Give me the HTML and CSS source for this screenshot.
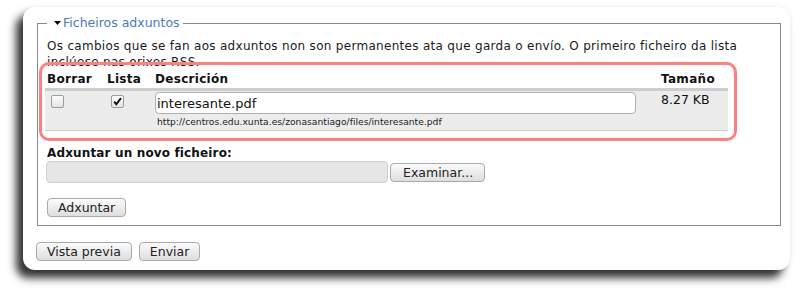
FILE: index.html
```html
<!DOCTYPE html>
<html lang="gl">
<head>
<meta charset="utf-8">
<title>Ficheiros adxuntos</title>
<link rel="stylesheet" href="styles.css">
</head>
<body>
<div class="card">
  <fieldset class="attachments">
    <legend class="legend"><svg class="arrow" width="7" height="4" viewBox="0 0 7 4"><polygon points="0,0 7,0 3.5,4" fill="#000"/></svg>Ficheiros adxuntos</legend>
    <p class="intro">Os cambios que se fan aos adxuntos non son permanentes ata que garda o envío. O primeiro ficheiro da lista inclúese nas orixes RSS.</p>
    <table class="files">
      <colgroup>
        <col class="c-del"><col class="c-list"><col class="c-desc"><col class="c-size">
      </colgroup>
      <thead>
        <tr><th>Borrar</th><th>Lista</th><th>Descrición</th><th>Tamaño</th></tr>
      </thead>
      <tbody>
        <tr>
          <td><span class="check" role="checkbox" aria-checked="false"></span></td>
          <td><span class="check" role="checkbox" aria-checked="true"><svg width="11" height="11" viewBox="0 0 11 11"><path d="M2.2 5.6 L4.3 8.2 L9 2.2" fill="none" stroke="#111" stroke-width="1.9"/></svg></span></td>
          <td>
            <input class="desc-input" type="text" value="interesante.pdf">
            <div class="url">http://centros.edu.xunta.es/zonasantiago/files/interesante.pdf</div>
          </td>
          <td class="size">8.27 KB</td>
        </tr>
      </tbody>
    </table>
    <div class="new-label">Adxuntar un novo ficheiro:</div>
    <div class="file-row">
      <input class="file-path" type="text" disabled>
      <button class="btn browse" type="button">Examinar...</button>
    </div>
    <div class="attach-row"><button class="btn" type="button">Adxuntar</button></div>
  </fieldset>
  <div class="actions">
    <button class="btn" type="button">Vista previa</button>
    <button class="btn" type="button">Enviar</button>
  </div>
  <div class="highlight"></div>
</div>
</body>
</html>
```
FILE: styles.css
```css
* { box-sizing: border-box; }
html, body { margin: 0; background: #fff; }
body {
  padding: 7px 10px 23px 23px;
  font-family: "DejaVu Sans", "Liberation Sans", sans-serif;
  font-size: 12px;
  line-height: 16px;
  color: #111;
}
.card {
  position: relative;
  width: 767px;
  background: #fff;
  border-radius: 12px;
  padding: 8px 9px 9px 14px;
  box-shadow: -7px 8px 9px rgba(0,0,0,0.8), 0 0 6px rgba(0,0,0,0.07);
}
.attachments {
  margin: 0;
  border: 1px solid #8a8a8a;
  padding: 7px 9px 8px 9px;
  min-inline-size: 0;
}
.legend {
  padding: 0 3px 0 7px;
  font-size: 12.5px;
  line-height: 16px;
  color: #4a7cb4;
}
.arrow { margin-right: 2px; vertical-align: 2px; }
.intro { margin: 0; letter-spacing: 0.3px; color: #1a1a1a; }
.files {
  margin-left: -2px;
  width: 683px;
  table-layout: fixed;
  border-collapse: collapse;
}
.c-del { width: 60px; }
.c-list { width: 48px; }
.c-desc { width: 506px; }
.c-size { width: 69px; }
.files th {
  text-align: left;
  font-weight: bold;
  padding: 1px 2px;
  line-height: 16px;
  letter-spacing: 0.3px;
  border-bottom: 3px solid #cdcdcd;
}
.files td {
  vertical-align: top;
  padding: 1px 2px 2px 2px;
  background: #ececec;
  border-bottom: 1px solid #cdcdcd;
}
.check {
  display: block;
  width: 13px;
  height: 13px;
  margin: 3px 0 0 4px;
  border: 1px solid #9c9c9c;
  border-radius: 2px;
  background: linear-gradient(#fdfdfd, #e2e2e2);
}
.check svg { display: block; margin: 0; }
.desc-input {
  display: block;
  width: 481px;
  height: 22px;
  margin: 0;
  padding: 0 1px;
  border: 1px solid #b0b0b0;
  border-radius: 4px;
  background: #fff;
  font-family: "DejaVu Sans", sans-serif;
  font-size: 13px;
  color: #111;
  outline: none;
}
.url {
  margin-top: 2px;
  padding-left: 2px;
  font-size: 9.2px;
  line-height: 12px;
  color: #222;
}
.size { font-size: 12.5px; line-height: 16px; }
.new-label {
  margin-top: 14px;
  font-weight: bold;
  letter-spacing: 0.15px;
}
.file-row {
  display: flex;
  align-items: center;
  height: 22px;
  margin-left: -1px;
}
.file-path {
  width: 342px;
  height: 22px;
  margin: 0;
  border: 1px solid #cfcfcf;
  border-radius: 4px;
  background: #e6e6e6;
}
.btn {
  height: 19px;
  margin: 0;
  padding: 0 10px;
  border: 1px solid #a9a9a9;
  border-radius: 4px;
  background: linear-gradient(#fbfbfb, #dedede);
  font-family: "DejaVu Sans", sans-serif;
  font-size: 12.5px;
  line-height: 17px;
  color: #222;
}
.browse { margin-left: 2px; padding: 0 11px 0 12px; }
.attach-row { margin-top: 15px; display: flex; }
.actions {
  display: flex;
  gap: 7px;
  margin-top: 16px;
  margin-left: -1px;
}
.highlight {
  position: absolute;
  left: 16px;
  top: 55px;
  width: 698px;
  height: 79px;
  border: 3px solid #ff8080;
  border-radius: 10px;
  pointer-events: none;
}
```
